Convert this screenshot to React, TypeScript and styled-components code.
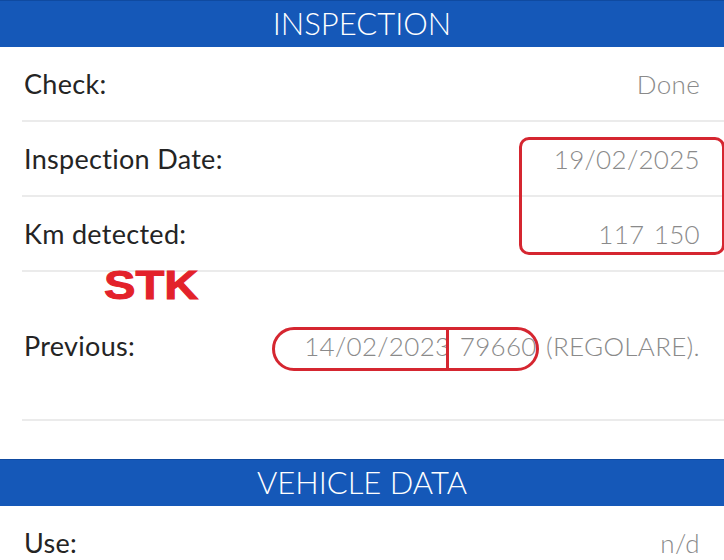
import React, { FC } from "react";
import styled, { createGlobalStyle } from "styled-components";

const GlobalStyle = createGlobalStyle`
  html, body {
    margin: 0;
    padding: 0;
    background: #ffffff;
  }
  body {
    font-family: Lato, "Open Sans", "Liberation Sans", sans-serif;
    overflow: hidden;
  }
`;

const Page = styled.div`
  position: relative;
  width: 724px;
  height: 560px;
  overflow: hidden;
  background: #ffffff;
`;

const SectionHeader = styled.div`
  height: 47px;
  background: #1558b8;
  border-top: 1px solid #0f4aa0;
  box-sizing: border-box;
  display: flex;
  align-items: center;
  justify-content: center;
  color: #ffffff;
  font-size: 31px;
  font-weight: 300;
  padding-bottom: 2px;
`;

const Row = styled.div<{ $tall?: boolean }>`
  height: ${(p) => (p.$tall ? 149 : 75)}px;
  margin-left: 22px;
  padding: 0 24px 0 2px;
  box-sizing: border-box;
  display: flex;
  align-items: center;
  justify-content: space-between;
  border-bottom: 2px solid #ebebeb;
`;

const Label = styled.span`
  color: #242424;
  font-size: 27px;
  font-weight: 400;
  letter-spacing: 0.3px;
`;

const Value = styled.span`
  color: #8a8a8a;
  font-size: 26px;
  font-weight: 300;
  letter-spacing: 0.3px;
  word-spacing: 2px;
  white-space: nowrap;
`;

const Gap = styled.div`
  height: 38px;
`;

/* red annotations drawn over the screenshot */
const Stamp = styled.div`
  position: absolute;
  left: 104px;
  top: 262px;
  color: #e3222a;
  font-family: "Liberation Sans", Arial, sans-serif;
  font-weight: 700;
  font-size: 41px;
  -webkit-text-stroke: 1px #e3222a;
  transform: scaleX(1.15);
  transform-origin: left center;
`;

const Mark = styled.div<{ $radius: number }>`
  position: absolute;
  border: 3px solid #d52630;
  border-radius: ${(p) => p.$radius}px;
  box-sizing: border-box;
`;

const Divider = styled.div`
  position: absolute;
  width: 3px;
  background: #d52630;
`;

interface FieldProps {
  label: string;
  value: string;
  tall?: boolean;
}

const Field: FC<FieldProps> = ({ label, value, tall }) => (
  <Row $tall={tall}>
    <Label>{label}</Label>
    <Value>{value}</Value>
  </Row>
);

const App: FC = () => {
  return (
    <Page>
      <GlobalStyle />
      <SectionHeader>INSPECTION</SectionHeader>
      <Field label="Check:" value="Done" />
      <Field label="Inspection Date:" value="19/02/2025" />
      <Field label="Km detected:" value="117 150" />
      <Field label="Previous:" value="14/02/2023 79660 (REGOLARE)." tall />
      <Gap />
      <SectionHeader>VEHICLE DATA</SectionHeader>
      <Field label="Use:" value="n/d" />

      <Stamp>STK</Stamp>
      <Mark $radius={10} style={{ left: 519, top: 137, width: 206, height: 118 }} />
      <Mark $radius={22} style={{ left: 272, top: 327, width: 267, height: 44 }} />
      <Divider style={{ left: 446, top: 328, height: 42 }} />
    </Page>
  );
};

export default App;
